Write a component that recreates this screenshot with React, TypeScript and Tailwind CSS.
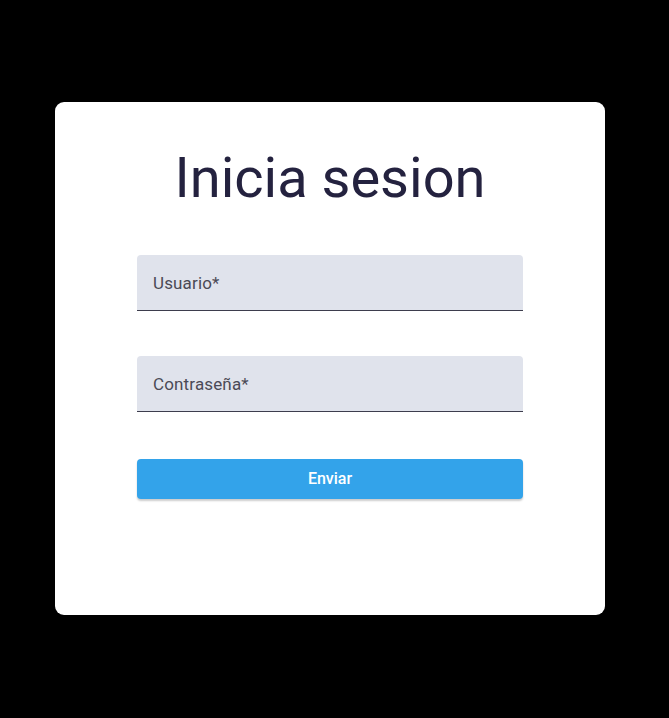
export default function App() {
  return (
    <div className="min-h-[718px] w-full bg-black pt-[102px]" style={{ fontFamily: 'Roboto, "Liberation Sans", sans-serif' }}>
      <div className="ml-[55px] w-[550px] h-[513px] rounded-[9px] bg-white px-[82px] pt-[41px]">
        <h1 className="text-center text-[56px] leading-[70px] font-normal text-[#24223f]">Inicia sesion</h1>
        <div className="mt-[42px] flex flex-col">
          <div className="h-[56px] rounded-t-[4px] bg-[#e0e3ec] border-b border-[#3d3d4d] flex items-center pl-4 pt-[2px]">
            <span className="text-[17px] text-[#4b4a56] tracking-[0.15px]">Usuario*</span>
          </div>
          <div className="mt-[45px] h-[56px] rounded-t-[4px] bg-[#e0e3ec] border-b border-[#3d3d4d] flex items-center pl-4 pt-[2px]">
            <span className="text-[17px] text-[#4b4a56] tracking-[0.15px]">Contraseña*</span>
          </div>
          <button className="mt-[47px] h-[40px] w-full rounded-[4px] bg-[#33a3ea] text-white text-[16px] font-medium shadow-[0_2px_2px_rgba(0,0,0,0.2)]">
            Enviar
          </button>
        </div>
      </div>
    </div>
  );
}
